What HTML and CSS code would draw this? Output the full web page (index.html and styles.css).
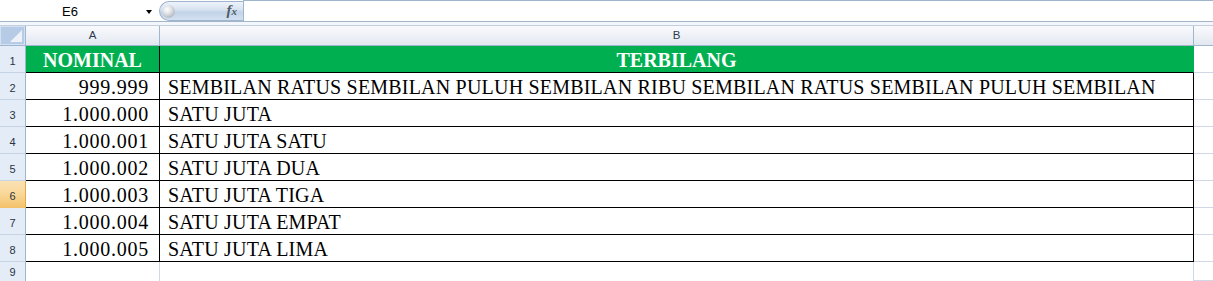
FILE: index.html
```html
<!DOCTYPE html>
<html>
<head>
<meta charset="utf-8">
<link rel="stylesheet" href="styles.css">
</head>
<body>
<div class="app">
  <div class="fbar">
    <div class="namebox"><span class="name">E6</span><span class="drop"></span></div>
    <div class="pill"><span class="knob"></span><span class="fx">f<span class="fxsub">x</span></span></div>
    <div class="finput"></div>
  </div>
  <div class="gap"></div>
  <div class="sheet">
    <div class="corner"><span class="tri"></span></div>
    <div class="ch">A</div>
    <div class="ch">B</div>
    <div class="ch chlast"></div>

    <div class="rh">1</div>
    <div class="c head ca">NOMINAL</div>
    <div class="c head cb">TERBILANG</div>
    <div class="c empty"></div>

    <div class="rh">2</div>
    <div class="c num">999.999</div>
    <div class="c txt">SEMBILAN RATUS SEMBILAN PULUH SEMBILAN RIBU SEMBILAN RATUS SEMBILAN PULUH SEMBILAN</div>
    <div class="c empty"></div>

    <div class="rh">3</div>
    <div class="c num">1.000.000</div>
    <div class="c txt">SATU JUTA</div>
    <div class="c empty"></div>

    <div class="rh">4</div>
    <div class="c num">1.000.001</div>
    <div class="c txt">SATU JUTA SATU</div>
    <div class="c empty"></div>

    <div class="rh">5</div>
    <div class="c num">1.000.002</div>
    <div class="c txt">SATU JUTA DUA</div>
    <div class="c empty"></div>

    <div class="rh rhsel">6</div>
    <div class="c num">1.000.003</div>
    <div class="c txt">SATU JUTA TIGA</div>
    <div class="c empty"></div>

    <div class="rh">7</div>
    <div class="c num">1.000.004</div>
    <div class="c txt">SATU JUTA EMPAT</div>
    <div class="c empty"></div>

    <div class="rh">8</div>
    <div class="c num">1.000.005</div>
    <div class="c txt">SATU JUTA LIMA</div>
    <div class="c empty"></div>

    <div class="rh rhpart">9</div>
    <div class="c blank"></div>
    <div class="c blank"></div>
    <div class="c empty"></div>
  </div>
</div>
</body>
</html>
```

FILE: styles.css
```css
html, body {
  margin: 0;
  padding: 0;
  background: #ffffff;
  overflow: hidden;
}

.app {
  width: 1213px;
  height: 281px;
  overflow: hidden;
  font-family: "Liberation Sans", Arial, sans-serif;
}

/* ---------- formula bar ---------- */
.fbar {
  display: flex;
  height: 21px;
  border-bottom: 1px solid #a3b5cb;
  background: #ffffff;
}

.namebox {
  width: 159px;
  display: flex;
  align-items: center;
}

.name {
  width: 140px;
  text-align: center;
  font-size: 13px;
  color: #000;
  padding-top: 1px;
}

.drop {
  width: 0;
  height: 0;
  margin-left: 6px;
  border-left: 3.5px solid transparent;
  border-right: 3.5px solid transparent;
  border-top: 4px solid #000;
  margin-top: 2px;
}

.pill {
  width: 84px;
  height: 20px;
  margin-top: 1px;
  box-sizing: border-box;
  border: 1px solid #9fb4cd;
  border-right: none;
  border-radius: 10px 0 0 10px;
  background: linear-gradient(#eef3fa, #d6e1ef 45%, #c2d3e8 55%, #d3e0f0);
  display: flex;
  align-items: center;
  justify-content: space-between;
  padding-left: 2px;
  padding-right: 6px;
}

.knob {
  width: 13px;
  height: 13px;
  border-radius: 50%;
  background: radial-gradient(circle at 40% 35%, #ffffff 0%, #e1e4e8 35%, #a8afb7 85%, #8e969f 100%);
}

.fx {
  font-family: "Liberation Serif", "Times New Roman", serif;
  font-style: italic;
  font-weight: bold;
  font-size: 15px;
  color: #4f5b67;
  line-height: 15px;
}

.fxsub {
  font-size: 11px;
}

.finput {
  flex: 1;
  border-top: 1px solid #9fb4cd;
  border-left: 1px solid #9fb4cd;
  background: #ffffff;
}

.gap {
  height: 3px;
  background: #f3f6fa;
  border-bottom: 1px solid #c3cfde;
}

/* ---------- sheet grid ---------- */
.sheet {
  display: grid;
  grid-template-columns: 26px 134px 1034px 1fr;
  grid-template-rows: 20px repeat(8, 27px) 19px;
}

.corner {
  box-sizing: border-box;
  border-right: 1px solid #9eb6ce;
  border-bottom: 1px solid #9eb6ce;
  background: #b6cbe6;
  position: relative;
  box-shadow: inset 0 0 0 1px #d4e1f2;
}

.tri {
  position: absolute;
  right: 3px;
  bottom: 3px;
  width: 0;
  height: 0;
  border-left: 12px solid transparent;
  border-bottom: 12px solid #eef2f8;
}

.ch {
  box-sizing: border-box;
  border-right: 1px solid #9eb6ce;
  border-bottom: 1px solid #9eb6ce;
  background: linear-gradient(#f9fafd, #eef1f7 50%, #e2e7f0);
  text-align: center;
  font-size: 11.5px;
  line-height: 19px;
  color: #2c3a4c;
}

.chlast {
  border-right: none;
}

.rh {
  box-sizing: border-box;
  border-right: 1px solid #9eb6ce;
  border-bottom: 1px solid #c6d3e4;
  background: #e4ecf7;
  text-align: center;
  font-size: 11px;
  line-height: 14px;
  padding-top: 8px;
  color: #2a3441;
}

.rhsel {
  background: linear-gradient(#fbe2b4, #f9d798 50%, #f3c36c);
  border-bottom-color: #f2c06a;
  border-right-color: #e3a94f;
}

.rhpart {
  padding-top: 3px;
  border-bottom: none;
}

.c {
  box-sizing: border-box;
  border-right: 1px solid #000;
  border-bottom: 1px solid #000;
  font-family: "Liberation Serif", "Times New Roman", serif;
  font-size: 20px;
  line-height: 26px;
  padding-top: 1px;
  color: #000;
  white-space: nowrap;
}

.head {
  background: #00b050;
  color: #ffffff;
  font-weight: bold;
  text-align: center;
}

.cb {
  border-right-color: #00b050;
}

.num {
  text-align: right;
  padding-right: 10px;
  letter-spacing: 0.75px;
}

.txt {
  padding-left: 8px;
  letter-spacing: 0.2px;
}

.empty {
  border-right: none;
  border-bottom: 1px solid #d0d7e5;
}

.blank {
  border-right: 1px solid #d0d7e5;
  border-bottom: none;
}
```
